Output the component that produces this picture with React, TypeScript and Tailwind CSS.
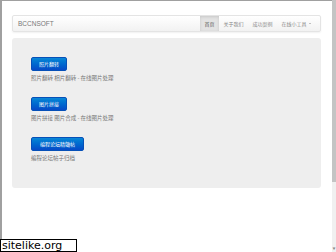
import { ReactNode } from 'react';

const font = { fontFamily: '"Noto Sans CJK SC", "Liberation Sans", sans-serif' };

const items = [
    { label: '照片翻转', desc: '照片翻转 相片翻转 - 在线图片处理', w: 'w-[36px]' },
    { label: '图片拼接', desc: '图片拼接 图片合成 - 在线图片处理', w: 'w-[36px]' },
    { label: '编程论坛精髓帖', desc: '编程论坛帖子归档', w: 'w-[53px]' },
];

const NavLink = ({ children, active }: { children: ReactNode; active?: boolean }) => (
    <div
        className={`h-full flex items-center px-[4.5px] text-[5px] ${
            active ? 'bg-[#e3e3e3] text-[#555] shadow-[inset_0_1px_3px_rgba(0,0,0,0.12)]' : 'text-[#888]'
        }`}
    >
        {children}
    </div>
);

const App = () => {
    return (
        <div className="relative w-[336px] h-[252px] overflow-hidden bg-white flex" style={font}>
            {/* page */}
            <div className="flex-1 border-l-[2px] border-t border-[#a0a0a0] pl-[10px] pr-[11px] pt-[14px]">
                {/* navbar */}
                <div className="h-[17px] flex items-center justify-between rounded-[2px] border border-[#e4e4e4] bg-gradient-to-b from-white to-[#f2f2f2] shadow-[0_1px_2px_rgba(0,0,0,0.06)] pl-[5px] pr-[5px]">
                    <span className="text-[6.5px] text-[#777]" style={{ fontFamily: '"Liberation Sans", sans-serif' }}>
                        BCCNSOFT
                    </span>
                    <div className="h-full flex items-center">
                        <NavLink active>首页</NavLink>
                        <NavLink>关于我们</NavLink>
                        <NavLink>成功案例</NavLink>
                        <NavLink>
                            在线小工具
                            <span className="ml-[2px] w-0 h-0 border-x-[1.5px] border-x-transparent border-t-[1.5px] border-t-[#888]" />
                        </NavLink>
                    </div>
                </div>

                {/* jumbotron */}
                <div className="mt-[6px] h-[150px] rounded-[3px] bg-[#eeeeee] pl-[19px] pt-[19px] flex flex-col">
                    {items.map((it, i) => (
                        <div key={it.label} className={i > 0 ? 'mt-[15px]' : ''}>
                            <div
                                className={`${it.w} h-[14px] rounded-[2px] bg-gradient-to-b from-[#0a86d6] to-[#0849c7] border border-[#0650b8] flex items-center justify-center text-[5px] text-white`}
                            >
                                {it.label}
                            </div>
                            <div className="mt-[3px] h-[8px] flex items-center text-[5.5px] text-[#777] whitespace-nowrap">{it.desc}</div>
                        </div>
                    ))}
                </div>
            </div>

            {/* scrollbar */}
            <div className="w-[4px] h-full bg-[#f0f0f0] flex flex-col">
                <div className="h-[182px] bg-[#c4c4c4]" />
                <div className="flex-1" />
                <div className="h-[4px] text-[3px] text-[#888] leading-none text-center">▼</div>
            </div>

            {/* watermark */}
            <div
                className="absolute left-0 bottom-0 w-[77px] h-[13px] border border-black bg-white text-black text-[11px] leading-[12px] pl-[1px]"
                style={{ fontFamily: '"DejaVu Sans", sans-serif' }}
            >
                sitelike.org
            </div>
        </div>
    );
};

export default App;
